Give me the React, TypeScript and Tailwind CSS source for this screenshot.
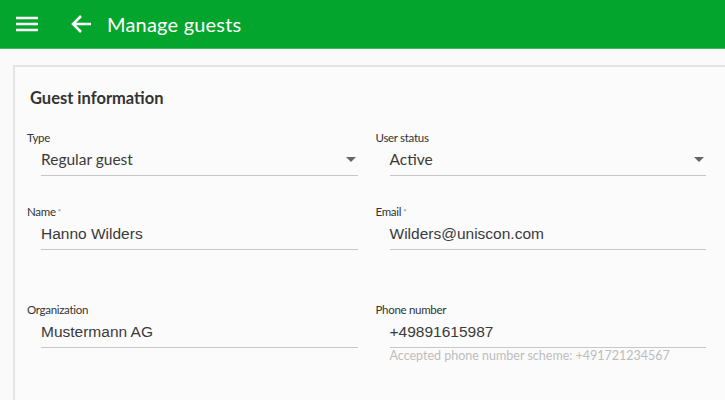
import React from 'react';

type FieldProps = {
  label: string;
  value: string;
  required?: boolean;
  select?: boolean;
  serif?: boolean;
  helper?: string;
  className?: string;
};

function Field({ label, value, required, select, serif, helper, className }: FieldProps) {
  return (
    <div className={className}>
      <div className="h-[14px] text-[11.5px] leading-[14px] tracking-[-0.3px] text-[#333]">
        {label}
        {required && <span className="ml-[2px] align-top text-[8px] text-[#888]">*</span>}
      </div>
      <div className="ml-[14px] flex h-[31px] items-center justify-between border-b border-[#c8c8c8] pr-[2px]">
        <span
          className={
            serif
              ? "font-['Liberation_Sans',Arial,sans-serif] text-[15.5px] text-[#3a3a3a]"
              : "text-[15.5px] text-[#3a3a3a]"
          }
        >
          {value}
        </span>
        {select && (
          <svg width="10" height="5" viewBox="0 0 10 5" className="mb-[1px]">
            <path d="M0 0h10L5 5z" fill="#666" />
          </svg>
        )}
      </div>
      {helper && (
        <div className="ml-[14px] mt-[1px] text-[12.5px] leading-[14px] text-[#bdbdbd]">{helper}</div>
      )}
    </div>
  );
}

export default function App() {
  return (
    <div className="h-[400px] overflow-hidden bg-[#fafafa] font-['Lato',sans-serif]">
      <header className="flex h-[49px] items-center border-b border-[#3cbb5a] bg-[#04a52c] text-white">
        <button type="button" className="ml-[16px] flex h-[22px] w-[22px] items-center">
          <svg width="22" height="16" viewBox="0 0 22 16">
            <path d="M0 2h22M0 8h22M0 14h22" stroke="#fff" strokeWidth="2.4" />
          </svg>
        </button>
        <button type="button" className="ml-[32px] flex items-center">
          <svg width="22" height="20" viewBox="0 0 22 20">
            <path d="M21 10H3M11 2l-8 8 8 8" stroke="#fff" strokeWidth="2.6" fill="none" />
          </svg>
        </button>
        <h1 className="ml-[15px] text-[20px] tracking-[0.2px]">Manage guests</h1>
      </header>

      <main className="pl-[13px] pt-[16px]">
        <section className="border-l-2 border-t-2 border-[#e4e4e4] bg-[#fbfbfb] pl-[12px] pt-[19px] pb-[40px]">
          <h2 className="ml-[3px] text-[16.5px] font-bold leading-[24px] text-[#333]">Guest information</h2>
          <div className="mt-[21px] grid w-[679px] grid-cols-2 gap-x-[18px]">
            <Field label="Type" value="Regular guest" select />
            <Field label="User status" value="Active" select />
            <Field className="mt-[29px]" label="Name" value="Hanno Wilders" required serif />
            <Field className="mt-[29px]" label="Email" value="Wilders@uniscon.com" required serif />
            <Field className="mt-[53px]" label="Organization" value="Mustermann AG" serif />
            <Field
              className="mt-[53px]"
              label="Phone number"
              value="+49891615987"
              serif
              helper="Accepted phone number scheme: +491721234567"
            />
          </div>
        </section>
      </main>
    </div>
  );
}
